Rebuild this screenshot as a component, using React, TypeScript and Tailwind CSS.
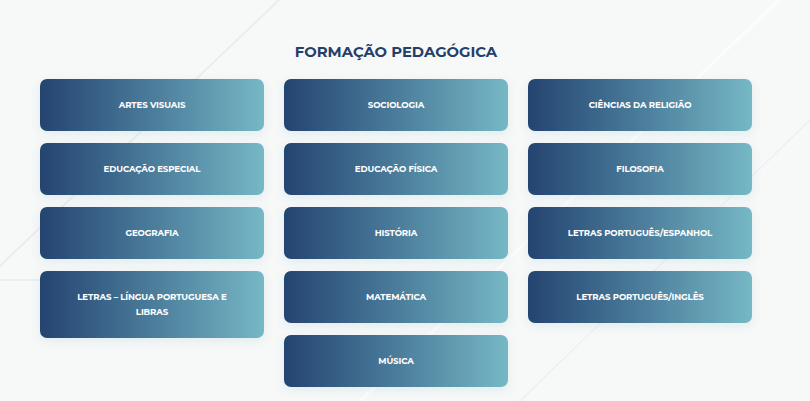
const columns: string[][] = [
  ['ARTES VISUAIS', 'EDUCAÇÃO ESPECIAL', 'GEOGRAFIA', 'LETRAS – LÍNGUA PORTUGUESA E LIBRAS'],
  ['SOCIOLOGIA', 'EDUCAÇÃO FÍSICA', 'HISTÓRIA', 'MATEMÁTICA', 'MÚSICA'],
  ['CIÊNCIAS DA RELIGIÃO', 'FILOSOFIA', 'LETRAS PORTUGUÊS/ESPANHOL', 'LETRAS PORTUGUÊS/INGLÊS'],
];

function CourseCard({ name }: { name: string }) {
  return (
    <div className="rounded-[7px] bg-gradient-to-r from-[#254471] to-[#76b8c5] px-[34px] pt-[19px] pb-[18px] text-center text-[8.6px] font-bold leading-[15px] tracking-[-0.1px] text-white shadow-[0_3px_10px_rgba(120,190,200,0.18)]">
      {name}
    </div>
  );
}

export default function App() {
  return (
    <div
      className="relative h-[401px] w-[810px] overflow-hidden bg-[#f7f8f8]"
      style={{ fontFamily: 'Montserrat, "Open Sans", "Liberation Sans", sans-serif' }}
    >
      {/* faint diagonal streaks in the background */}
      <svg className="pointer-events-none absolute inset-0" width="810" height="401">
        <line x1="-20" y1="285" x2="300" y2="-20" stroke="#ececee" strokeWidth="2" />
        <line x1="360" y1="401" x2="810" y2="-30" stroke="#fcfcfd" strokeWidth="3" />
        <line x1="520" y1="401" x2="810" y2="120" stroke="#eeeff1" strokeWidth="1.5" />
        <line x1="0" y1="280" x2="60" y2="280" stroke="#eceef0" strokeWidth="2" />
      </svg>

      <div className="relative ml-10 w-[712px] pt-[41px]">
        <h2 className="text-center text-[14.8px] font-bold text-[#243f68]">
          FORMAÇÃO PEDAGÓGICA
        </h2>
        <div className="mt-4 grid grid-cols-3 items-start gap-x-5">
          {columns.map((col, i) => (
            <div key={i} className="flex flex-col gap-3">
              {col.map((name) => (
                <CourseCard key={name} name={name} />
              ))}
            </div>
          ))}
        </div>
      </div>
    </div>
  );
}
